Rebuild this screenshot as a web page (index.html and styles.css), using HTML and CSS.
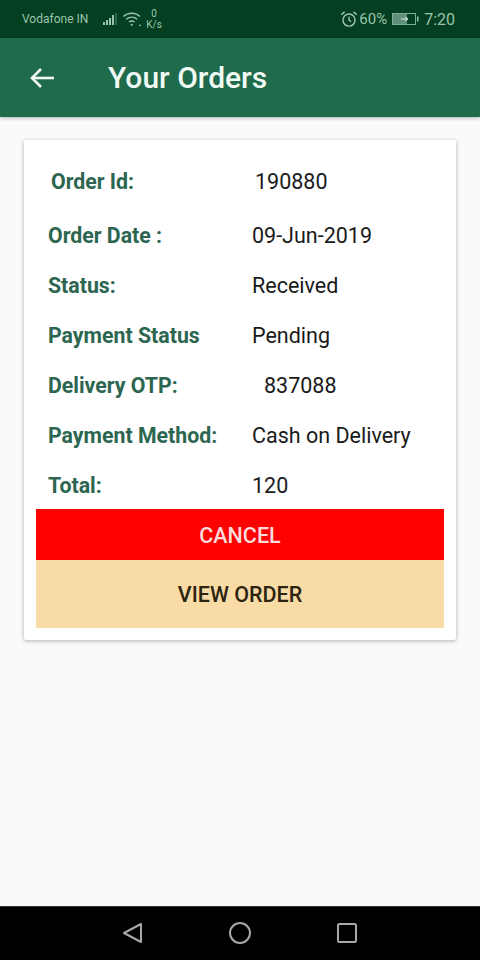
FILE: index.html
```html
<!DOCTYPE html>
<html lang="en">
<head>
  <meta charset="UTF-8">
  <title>Your Orders</title>
  <link rel="stylesheet" href="styles.css">
</head>
<body>
  <div class="screen">
    <!-- Status bar -->
    <div class="status-bar">
      <div class="status-left">
        <span class="carrier">Vodafone IN</span>
        <svg class="signal" width="16" height="14" viewBox="0 0 16 14">
          <rect x="0" y="10" width="2" height="3" fill="#9cc4ad"/>
          <rect x="3" y="8" width="2" height="5" fill="#9cc4ad"/>
          <rect x="6" y="6" width="2" height="7" fill="#9cc4ad"/>
          <rect x="9" y="3" width="2" height="10" fill="#9cc4ad"/>
          <rect x="12.5" y="1" width="1" height="12" fill="#5f917a"/>
        </svg>
        <svg class="wifi" width="20" height="16" viewBox="0 0 17.500 14.500" fill="none" stroke="#9cc4ad" stroke-width="1.300">
          <path d="M1 5 C5 1 12 1 16 5"/>
          <path d="M3.5 7.5 C6.5 5 10.500 5 13.500 7.500"/>
          <path d="M6 10 C7.500 8.800 9.500 8.800 11 10"/>
          <circle cx="8.500" cy="12.500" r="1" fill="#9cc4ad" stroke="none"/>
          <circle cx="16" cy="13" r="0.800" fill="#9cc4ad" stroke="none"/>
        </svg>
        <span class="speed"><span>0</span><span>K/s</span></span>
      </div>
      <div class="status-right">
        <svg class="alarm" width="16" height="16" viewBox="0 0 16 16" fill="none" stroke="#9cc4ad" stroke-width="1.300">
          <circle cx="8" cy="9" r="5.500"/>
          <path d="M8 6 V9 L10 10.500"/>
          <path d="M1 4 L4 1.500"/>
          <path d="M15 4 L12 1.500"/>
        </svg>
        <span class="pct">60%</span>
        <svg class="battery" width="27" height="12" viewBox="0 0 27 12">
          <rect x="0.500" y="0.500" width="23" height="11" fill="none" stroke="#7fae96"/>
          <rect x="1" y="1" width="14" height="10" fill="#5f917a"/>
          <path d="M9 6 H16 M13 4 L16 6 L13 8" stroke="#d5e8dc" stroke-width="1" fill="none"/>
          <rect x="25" y="3.500" width="1.500" height="5" fill="#9cc4ad"/>
        </svg>
        <span class="time">7:20</span>
      </div>
    </div>

    <!-- App bar -->
    <header class="app-bar">
      <svg class="back" width="26" height="24" viewBox="0 0 26 24" fill="none" stroke="#f2faf5" stroke-width="2.600">
        <path d="M25 12 H3"/>
        <path d="M12 3 L3 12 L12 21"/>
      </svg>
      <h1>Your Orders</h1>
    </header>

    <!-- Order card -->
    <main class="content">
      <div class="card">
        <div class="rows">
          <div class="row first"><span class="label">Order Id:</span><span class="value">190880</span></div>
          <div class="row"><span class="label">Order Date :</span><span class="value">09-Jun-2019</span></div>
          <div class="row"><span class="label">Status:</span><span class="value">Received</span></div>
          <div class="row"><span class="label">Payment Status</span><span class="value">Pending</span></div>
          <div class="row"><span class="label">Delivery OTP:</span><span class="value otp">837088</span></div>
          <div class="row"><span class="label">Payment Method:</span><span class="value">Cash on Delivery</span></div>
          <div class="row"><span class="label">Total:</span><span class="value">120</span></div>
        </div>
        <button type="button" class="btn btn-cancel">CANCEL</button>
        <button type="button" class="btn btn-view">VIEW ORDER</button>
      </div>
    </main>

    <!-- Navigation bar -->
    <nav class="nav-bar">
      <svg width="22" height="22" viewBox="0 0 22 22" fill="none" stroke="#a8a8a8" stroke-width="2">
        <path d="M19 2 V20 L2 11 Z" stroke-linejoin="round"/>
      </svg>
      <svg width="24" height="24" viewBox="0 0 24 24" fill="none" stroke="#a8a8a8" stroke-width="2">
        <circle cx="12" cy="12" r="10"/>
      </svg>
      <svg width="22" height="22" viewBox="0 0 22 22" fill="none" stroke="#a8a8a8" stroke-width="2">
        <rect x="2" y="2" width="18" height="18" rx="1.500"/>
      </svg>
    </nav>
  </div>
</body>
</html>
```

FILE: styles.css
```css
* { box-sizing: border-box; margin: 0; padding: 0; }
html, body { height: 100%; }
body {
  font-family: Roboto, "Liberation Sans", sans-serif;
  background: #fafafa;
  color: #1a1a1a;
}
.screen {
  height: 960px;
  display: flex;
  flex-direction: column;
}

/* Status bar */
.status-bar {
  height: 38px;
  background: #033f20;
  color: #9cc4ad;
  display: flex;
  justify-content: space-between;
  align-items: center;
  padding: 0 25px 0 22px;
}
.status-left, .status-right { display: flex; align-items: center; }
.carrier { font-size: 12px; margin-right: 15px; }
.signal { margin-right: 3px; }
.wifi { margin-right: 4px; }
.speed {
  display: flex;
  flex-direction: column;
  align-items: center;
  font-size: 10px;
  line-height: 11px;
}
.alarm { margin-right: 2px; transform: scale(1.1); }
.pct { font-size: 15px; margin-right: 5px; }
.battery { margin-right: 5px; }
.time { font-size: 16px; }

/* App bar */
.app-bar {
  height: 79px;
  background: #1f6b4c;
  display: flex;
  align-items: center;
  padding-left: 29px;
  box-shadow: 0 1px 4px rgba(0,0,0,.3);
}
.app-bar h1 {
  margin-left: 53px;
  font-size: 30px;
  font-weight: 500;
  color: #f2faf5;
}

/* Card */
.content { flex: 1; padding: 23px 24px 0; }
.card {
  background: #fff;
  height: 500px;
  padding: 14px 12px 0;
  border-radius: 2px;
  box-shadow: 0 1px 4px rgba(0,0,0,.3);
}
.rows { height: 355px; }
.row {
  height: 50px;
  display: grid;
  grid-template-columns: 204px 1fr;
  align-items: center;
  padding-left: 12px;
  font-size: 21.500px;
}
.row.first {
  height: 54px;
  margin-bottom: 2px;
  padding-left: 15px;
}
.label { font-weight: 700; font-size: 21.300px; color: #2d6650; }
.value { color: #1a1a1a; }
.otp { padding-left: 12px; }

/* Buttons */
.btn {
  display: block;
  width: 100%;
  border: none;
  font-family: inherit;
  font-size: 21.500px;
  font-weight: 500;
}
.btn-cancel {
  height: 51px;
  padding-top: 2px;
  background: #fe0000;
  color: #fbdcdc;
}
.btn-view {
  height: 68px;
  background: #f9dba6;
  color: #2c2410;
}

/* Navigation bar */
.nav-bar {
  height: 54px;
  background: #000;
  border-top: 1px solid #333;
  display: flex;
  justify-content: center;
  align-items: center;
  gap: 84px;
  padding-bottom: 2px;
}
```
